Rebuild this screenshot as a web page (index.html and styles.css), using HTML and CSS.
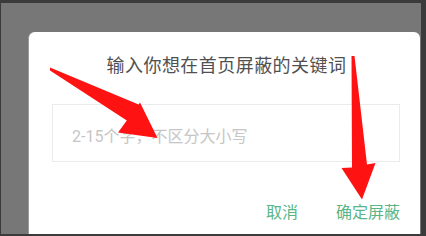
FILE: index.html
```html
<!DOCTYPE html>
<html lang="zh-CN">
<head>
    <meta charset="UTF-8">
    <meta name="viewport" content="width=device-width, initial-scale=1.0">
    <title>屏蔽关键词</title>
    <link rel="stylesheet" href="styles.css">
</head>
<body>
    <div class="screen">
        <div class="dialog">
            <h2 class="dialog-title">输入你想在首页屏蔽的关键词</h2>
            <div class="keyword-input">
                <span class="placeholder">2-15个字，不区分大小写</span>
            </div>
            <div class="dialog-actions">
                <button class="action">取消</button>
                <button class="action">确定屏蔽</button>
            </div>
        </div>
    </div>

    <!-- Annotation arrows drawn over the screenshot -->
    <svg class="arrows" width="426" height="236" viewBox="0 0 426 236">
        <polygon points="50,67.5 138.6,104.5 140,102.5 157.5,138 118,132.5 126.8,120.4 50,70.5" fill="#ff1212"/>
        <polygon points="351.5,56 354.5,56 367,164.5 375.5,163 362,199.5 341.5,168 352,167.5" fill="#ff1212"/>
    </svg>
</body>
</html>
```

FILE: styles.css
```css
body {
    margin: 0;
    width: 426px;
    height: 236px;
    background-color: #3b3b3b;
    font-family: Roboto, "Noto Sans CJK SC", sans-serif;
    position: relative;
    overflow: hidden;
}

.screen {
    margin: 3px 5px 0 1px;
    height: 231px;
    background-color: #777777;
    padding: 29px 1px 0 28px;
    box-sizing: border-box;
    overflow: hidden;
}

.dialog {
    background-color: white;
    border-radius: 6px 6px 0 0;
    height: 240px;
    padding-top: 25px;
    box-sizing: border-box;
    box-shadow: -1px 0 0 #9a9a9a;
}

.dialog-title {
    margin: 0;
    text-align: center;
    font-size: 18px;
    line-height: 18px;
    font-weight: normal;
    letter-spacing: 0.45px;
    color: #505050;
    padding-left: 4px;
}

.keyword-input {
    margin: 29px 20px 0 23px;
    height: 58px;
    border: 1px solid #ebebeb;
    box-sizing: border-box;
    display: flex;
    align-items: center;
    padding-left: 19px;
}

.placeholder {
    font-size: 16px;
    color: #c6c6c6;
    margin-top: 3px;
}

.dialog-actions {
    display: flex;
    justify-content: flex-end;
    gap: 38px;
    margin: 43px 20px 0 0;
}

.action {
    background: none;
    border: none;
    padding: 0;
    font-family: inherit;
    font-size: 16px;
    line-height: 16px;
    color: #5ab587;
    cursor: pointer;
}

.arrows {
    position: absolute;
    left: 0;
    top: 0;
    pointer-events: none;
}
```
